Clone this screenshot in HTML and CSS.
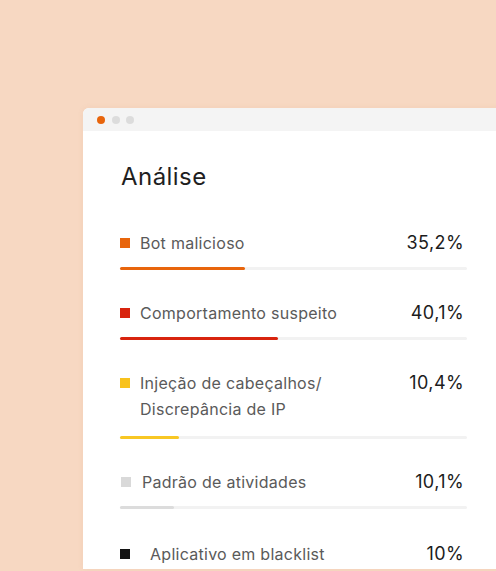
FILE: index.html
```html
<!DOCTYPE html>
<html lang="pt">
<head>
<meta charset="utf-8">
<link rel="stylesheet" href="styles.css">
</head>
<body>
<div class="window">
  <div class="titlebar">
    <span class="dot dot-active"></span>
    <span class="dot"></span>
    <span class="dot"></span>
  </div>
  <div class="content">
    <h1 class="title">Análise</h1>
    <div class="row">
      <div class="row-head">
        <div class="label"><span class="sq sq-orange"></span><span class="label-text">Bot malicioso</span></div>
        <div class="value">35,2%</div>
      </div>
      <div class="track"><div class="fill fill-orange" style="width:125px"></div></div>
    </div>
    <div class="row">
      <div class="row-head">
        <div class="label"><span class="sq sq-red"></span><span class="label-text">Comportamento suspeito</span></div>
        <div class="value">40,1%</div>
      </div>
      <div class="track"><div class="fill fill-red" style="width:158px"></div></div>
    </div>
    <div class="row">
      <div class="row-head">
        <div class="label"><span class="sq sq-yellow"></span><span class="label-text">Injeção de cabeçalhos/<br>Discrepância de IP</span></div>
        <div class="value">10,4%</div>
      </div>
      <div class="track track-tall"><div class="fill fill-yellow" style="width:59px"></div></div>
    </div>
    <div class="row">
      <div class="row-head">
        <div class="label label-wide"><span class="sq sq-gray"></span><span class="label-text">Padrão de atividades</span></div>
        <div class="value">10,1%</div>
      </div>
      <div class="track"><div class="fill fill-gray" style="width:54px"></div></div>
    </div>
    <div class="row row-last">
      <div class="row-head">
        <div class="label label-wider"><span class="sq sq-black"></span><span class="label-text">Aplicativo em blacklist</span></div>
        <div class="value">10%</div>
      </div>
    </div>
  </div>
</div>
</body>
</html>
```
FILE: styles.css
```css
* { box-sizing: border-box; }
html, body {
  margin: 0;
  padding: 0;
  width: 496px;
  height: 571px;
  overflow: hidden;
  background: #f7d8c2;
  font-family: Inter, "Noto Sans", sans-serif;
}
body {
  padding: 108px 0 0 83px;
}
.window {
  width: 421px;
  height: 461px;
  background: #ffffff;
  border-radius: 6px 6px 0 0;
  overflow: hidden;
  box-shadow: 0 0 6px rgba(180, 120, 80, 0.08);
}
.titlebar {
  height: 23px;
  background: #f4f4f4;
  display: flex;
  align-items: center;
  gap: 6.5px;
  padding-left: 14px;
}
.dot {
  width: 8px;
  height: 8px;
  border-radius: 50%;
  background: #dcdcdc;
}
.dot-active { background: #e8650c; }
.content {
  padding: 0 37px 0 37px;
}
.title {
  margin: 31px 0 0 1px;
  font-size: 24px;
  line-height: 30px;
  font-weight: 400;
  letter-spacing: 0.45px;
  color: #1f1f1f;
}
.row {
  margin-top: 30px;
}
.title + .row { margin-top: 38px; }
.row-last { margin-top: 32px; }
.row-head {
  display: flex;
  justify-content: space-between;
  align-items: flex-start;
}
.label {
  display: flex;
  align-items: flex-start;
  gap: 10px;
}
.label-wide { gap: 11px; }
.label-wider { gap: 20px; }
.sq {
  flex: none;
  width: 10px;
  height: 10px;
  margin-top: 8px;
}
.sq-orange { background: #e8650c; }
.sq-red { background: #d8240e; }
.sq-yellow { background: #f8c21d; }
.sq-gray { background: #d9d9d9; margin-left: 1px; }
.sq-black { background: #131313; }
.label-text {
  font-size: 16px;
  line-height: 26px;
  letter-spacing: 0.27px;
  color: #5a5a5a;
}
.value {
  font-size: 18px;
  line-height: 26px;
  letter-spacing: 0.4px;
  color: #1c1c1c;
  padding-right: 3px;
}
.track {
  margin-top: 11px;
  height: 3px;
  background: #f2f2f2;
  border-radius: 2px;
}
.track-tall { margin-top: 14px; }
.fill {
  height: 3px;
  border-radius: 2px;
}
.fill-orange { background: #e8650c; }
.fill-red { background: #d8240e; }
.fill-yellow { background: #f8c724; }
.fill-gray { background: #dcdcdc; }
```
